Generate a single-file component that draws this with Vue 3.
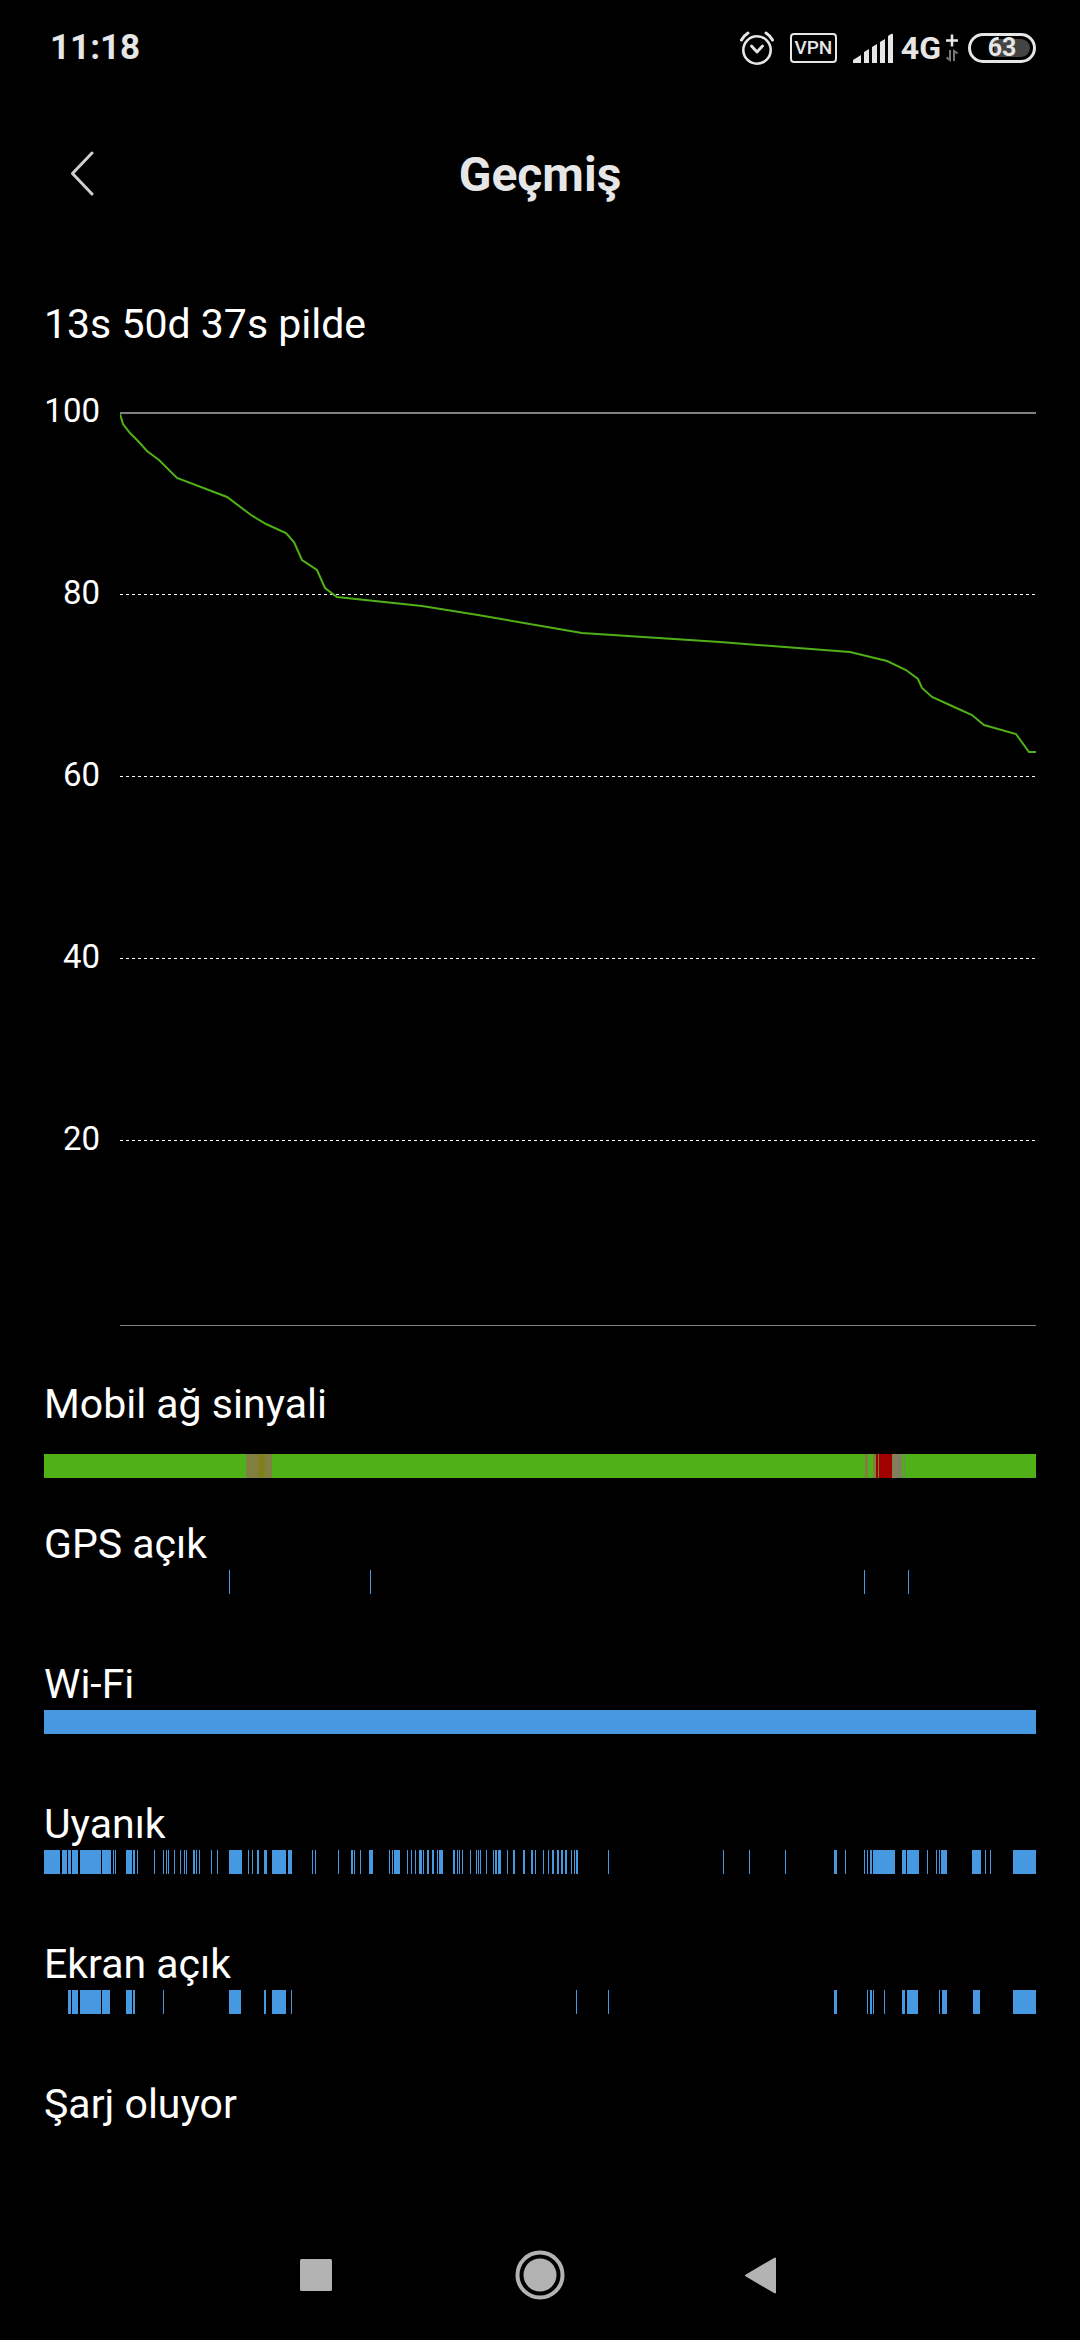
<script setup>
const axis = [100, 80, 60, 40, 20]
const gridLines = [182, 364, 546, 728]

const level = [
  [0, 2], [3, 12], [10, 21], [18, 29], [27, 39], [39, 48], [57, 66], [107, 85],
  [131, 103], [146, 112], [166, 121], [174, 130], [182, 148], [197, 158],
  [205, 176], [217, 185], [302, 194], [358, 203], [462, 221], [600, 230],
  [730, 240], [767, 249], [786, 258], [798, 267], [802, 276], [812, 285],
  [832, 294], [852, 303], [864, 313], [896, 322], [909, 340], [916, 340],
]
const levelPoints = level.map((p) => p.join(',')).join(' ')

const BLUE = '#4698e0'
const GREEN = '#50b018'
const RED = '#a00000'
const OLIVE = '#808040'
const GREY = '#808060'

// A number is a one-unit tick; a pair is [start, end].
const ticks = (list) =>
  list.map((s) => {
    const [from, to] = Array.isArray(s) ? s : [s, s + 1]
    return { from, to, color: BLUE }
  })

const rows = [
  {
    label: 'Mobil ağ sinyali',
    spaced: true,
    segments: [
      [44, 1036, GREEN], [246, 272, OLIVE], [258, 264, '#807f1c'], [264, 266, '#808030'],
      [865, 868, OLIVE], [873, 876, OLIVE], [876, 892, RED], [878, 879, '#7f7f20'],
      [892, 893, OLIVE], [893, 902, GREY], [904, 905, GREY],
    ].map(([from, to, color]) => ({ from, to, color })),
  },
  { label: 'GPS açık', segments: ticks([229, 370, 864, 908]) },
  { label: 'Wi-Fi', segments: ticks([[44, 1036]]) },
  {
    label: 'Uyanık',
    segments: ticks([
      [44, 60], [62, 67], [68, 71], [72, 78], [80, 101], [102, 111], 113, 115,
      [126, 132], [133, 135], 137, 154, 163, 166, 168, 174, 180, 184, 186,
      [193, 195], 196, 199, 211, 217, [229, 242], 248, 252, [257, 259],
      [264, 267], [272, 286], [288, 292], 312, 315, 338, [351, 353], 354, 360,
      [369, 373], 389, 392, [394, 400], 407, 411, 415, [419, 422], 423,
      [427, 429], [432, 434], 437, [439, 443], [453, 455], 457, 459, 462, 470,
      476, 478, 480, 486, 493, [495, 497], [498, 501], 507, [513, 515],
      [523, 525], [531, 533], 535, 543, 548, [552, 554], [557, 559],
      [561, 563], [565, 567], 571, 574, [576, 578], 608, 723, 749, 785,
      [834, 837], 845, 864, 867, [870, 872], [873, 895], [902, 906],
      [907, 919], 927, 936, 939, [941, 947], [972, 981], 985, 990, [1013, 1036],
    ]),
  },
  {
    label: 'Ekran açık',
    segments: ticks([
      [68, 71], [72, 78], [80, 101], [102, 110], [126, 132], [133, 135], 163,
      [229, 241], [264, 266], [272, 286], 291, 576, 608, [834, 837], 867,
      [870, 872], 873, 884, [902, 905], [907, 918], 939, [942, 947],
      [973, 980], [1013, 1036],
    ]),
  },
  { label: 'Şarj oluyor', segments: [] },
]
</script>

<template>
  <div class="screen">
    <div class="status">
      <time class="clock">11:18</time>
      <div class="indicators">
        <svg class="alarm" width="36" height="36" viewBox="0 0 36 36" fill="none" stroke="#e6e6e6" stroke-linecap="round">
          <circle cx="18" cy="20" r="13.7" stroke-width="2.6" />
          <path d="M12.5 16 L18 22 L23.5 16" stroke-width="2.8" stroke-linejoin="round" />
          <path d="M2.5 10 Q5 5.500 9 3 M33.500 10 Q31 5.500 27 3" stroke-width="3" />
        </svg>
        <span class="vpn">VPN</span>
        <svg class="signal" width="41" height="30" viewBox="0 0 41 30" fill="#e6e6e6">
          <path d="M0 30 V27 L8 22 V30 Z M11 30 V19 L16 16 V30 Z M19 30 V14 L24 11 V30 Z M27 30 V9 L32 6 V30 Z M35 30 V3 L38 1 Q40 0 40 2 V30 Z" />
        </svg>
        <span class="network">4G</span>
        <svg class="data" width="14" height="30" viewBox="0 0 14 30" fill="none">
          <path d="M7 1.500 V13.500 M1 7.500 H13" stroke="#e6e6e6" stroke-width="2.600" />
          <path d="M5 17 V27 L1.500 24.500 M9 28 V18 L12.500 20.500" stroke="#777" stroke-width="2" />
        </svg>
        <span class="battery"><span class="battery-text">63</span></span>
      </div>
    </div>

    <header class="header">
      <button class="back" type="button" aria-label="Geri">
        <svg width="28" height="48" viewBox="0 0 28 48" fill="none" stroke="#cfcfcf" stroke-width="3" stroke-linecap="round" stroke-linejoin="round">
          <path d="M24 2 L4.500 22.500 L24 43" />
        </svg>
      </button>
      <h1 class="title">Geçmiş</h1>
    </header>

    <main class="content">
      <h2 class="label">13s 50d 37s pilde</h2>

      <div class="chart">
        <div class="axis">
          <span v-for="n in axis" :key="n" class="axis-value">{{ n }}</span>
        </div>
        <svg class="plot" viewBox="0 0 916 914" preserveAspectRatio="none">
          <g shape-rendering="crispEdges">
            <rect width="916" height="2" fill="#808080" />
            <line v-for="y in gridLines" :key="y" x1="0" x2="916" :y1="y + 0.5" :y2="y + 0.5" stroke="#fff" stroke-dasharray="3 3" />
            <rect y="913" width="916" height="1" fill="#808080" />
          </g>
          <polyline :points="levelPoints" fill="none" stroke="#50b018" stroke-width="2" />
        </svg>
      </div>

      <section v-for="row in rows" :key="row.label" class="row" :class="{ spaced: row.spaced }">
        <h2 class="label">{{ row.label }}</h2>
        <svg class="track" viewBox="44 0 992 24" preserveAspectRatio="none" shape-rendering="crispEdges">
          <rect v-for="(s, i) in row.segments" :key="i" :x="s.from" :width="s.to - s.from" height="24" :fill="s.color" />
        </svg>
      </section>
    </main>

    <nav class="nav">
      <button type="button" aria-label="Son uygulamalar">
        <svg width="50" height="50" viewBox="0 0 50 50" fill="#b3b3b3"><rect x="7" y="9" width="32" height="32" rx="1.500" /></svg>
      </button>
      <button type="button" aria-label="Ana ekran">
        <svg width="50" height="50" viewBox="0 0 50 50">
          <circle cx="25" cy="25" r="22.500" fill="none" stroke="#b3b3b3" stroke-width="4" />
          <circle cx="25" cy="25" r="16.500" fill="#b3b3b3" />
        </svg>
      </button>
      <button type="button" aria-label="Geri git">
        <svg width="50" height="50" viewBox="0 0 50 50" fill="#b3b3b3" stroke="#b3b3b3" stroke-width="2" stroke-linejoin="round">
          <path d="M9 25.500 L38 8.500 V42.500 Z" />
        </svg>
      </button>
    </nav>
  </div>
</template>

<style>
body {
  background: #000;
}
</style>

<style scoped>
.screen {
  min-height: 100vh;
  background: #000;
  color: #fff;
  font-family: Roboto, "Noto Sans", sans-serif;
}

button {
  display: flex;
  padding: 0;
  border: 0;
  background: none;
}

svg {
  display: block;
  flex: none;
}

.status {
  display: flex;
  align-items: center;
  justify-content: space-between;
  height: 96px;
  padding: 0 44px 0 50px;
  color: #e6e6e6;
}

.clock {
  font-size: 35px;
  font-weight: 700;
  line-height: 40px;
}

.indicators {
  display: flex;
  align-items: center;
}

.vpn {
  box-sizing: border-box;
  width: 47px;
  height: 30px;
  margin: 0 16px 0 15px;
  border: 2px solid #e6e6e6;
  border-radius: 4px;
  font-size: 19px;
  font-weight: 500;
  line-height: 26px;
  text-align: center;
}

.network {
  margin: 0 4px 0 7px;
  font-size: 32px;
  font-weight: 700;
  line-height: 36px;
}

.battery {
  box-sizing: border-box;
  width: 68px;
  height: 30px;
  margin-left: 9px;
  padding: 3px;
  border: 3px solid #e6e6e6;
  border-radius: 15px;
  background: linear-gradient(90deg, #000 36%, #444 36%) content-box;
}

.battery-text {
  display: block;
  font-size: 25px;
  font-weight: 700;
  line-height: 18px;
  text-align: center;
}

.header {
  display: grid;
  grid-template-columns: 1fr auto 1fr;
  align-items: center;
  height: 158px;
  padding: 0 68px;
}

.title {
  margin: 0;
  color: #e6e6e6;
  font-size: 48px;
  font-weight: 700;
  line-height: 56px;
}

.content {
  padding: 46px 44px 0;
}

.label {
  margin: 0;
  font-size: 41px;
  font-weight: 400;
  line-height: 48px;
}

.chart {
  display: flex;
  gap: 20px;
  margin: 43px 0 54px;
}

.axis {
  display: flex;
  flex-direction: column;
  width: 56px;
  text-align: right;
}

.axis-value {
  height: 182px;
  font-size: 33px;
  line-height: 40px;
}

.plot {
  flex: 1;
  min-width: 0;
  height: 914px;
  margin-top: 21px;
}

.row {
  display: flex;
  flex-direction: column;
  gap: 2px;
  height: 140px;
}

.row.spaced {
  gap: 26px;
}

.track {
  width: 100%;
  height: 24px;
}

.nav {
  display: flex;
  align-items: center;
  justify-content: center;
  gap: 172px;
  height: 110px;
}
</style>
